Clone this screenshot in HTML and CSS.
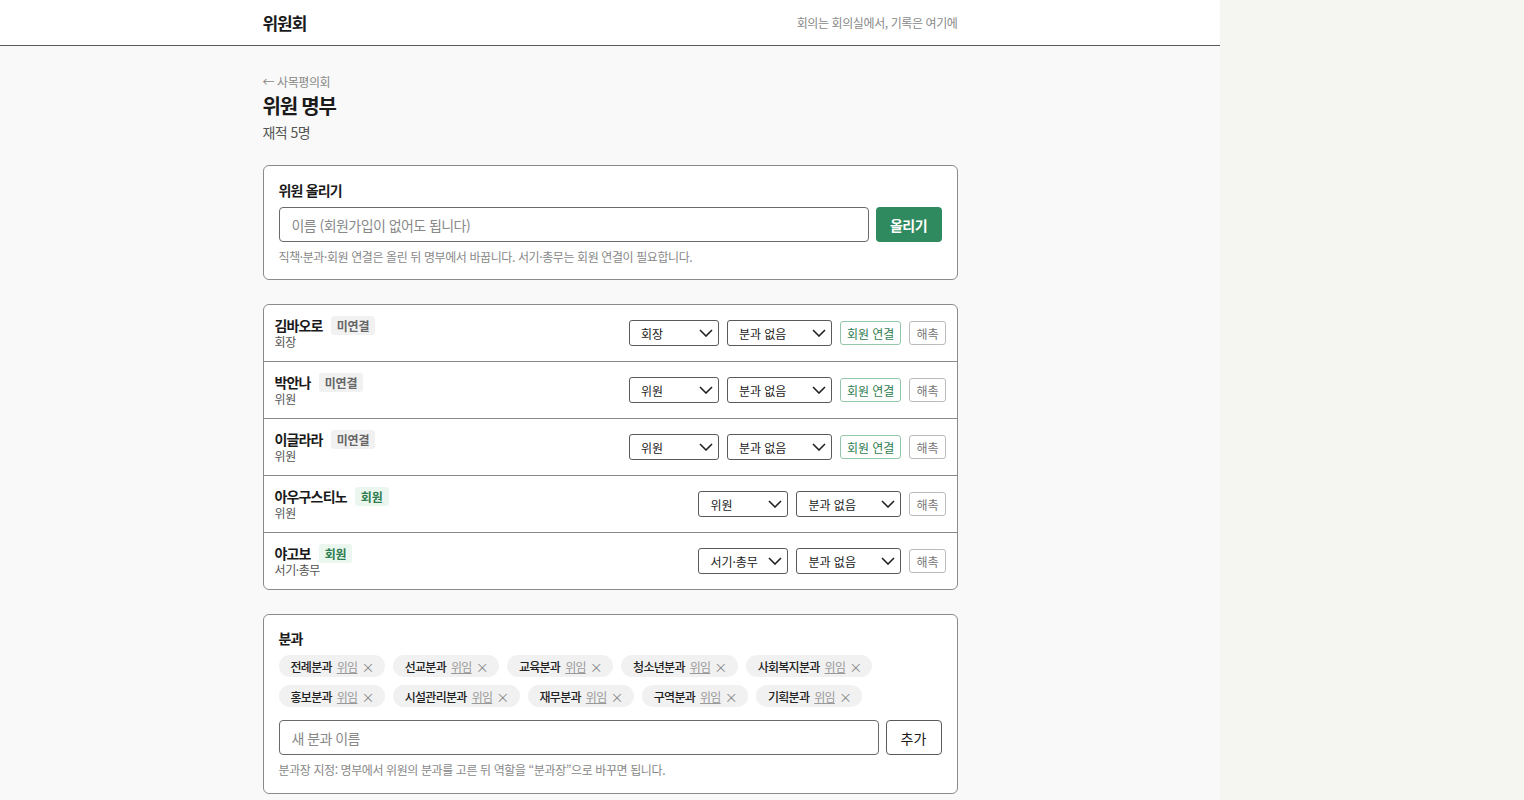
FILE: index.html
```html
<!DOCTYPE html>
<html lang="ko">

<head>
    <meta charset="utf-8">
    <meta name="viewport" content="width=device-width, initial-scale=1.0">
    <title>위원 명부 · 위원회</title>
    <link rel="stylesheet" href="styles.css">
</head>

<body>
    <div class="page">

        <header class="top">
            <div class="wrap top-inner">
                <span class="logo">위원회</span>
                <span class="motto">회의는 회의실에서, 기록은 여기에</span>
            </div>
        </header>

        <main class="wrap">
            <a class="back" href="#">← 사목평의회</a>
            <h1>위원 명부</h1>
            <p class="count">재적 5명</p>

            <!-- 위원 올리기 -->
            <section class="card add">
                <h2>위원 올리기</h2>
                <div class="field">
                    <input type="text" placeholder="이름 (회원가입이 없어도 됩니다)">
                    <button class="btn-green">올리기</button>
                </div>
                <p class="note">직책·분과·회원 연결은 올린 뒤 명부에서 바꿉니다. 서기·총무는 회원 연결이 필요합니다.</p>
            </section>

            <!-- 명부 -->
            <section class="card roster">
                <div class="row">
                    <div class="who">
                        <div class="name">김바오로 <span class="badge">미연결</span></div>
                        <div class="role">회장</div>
                    </div>
                    <div class="ctrl">
                        <select class="sel-role"><option>회장</option></select>
                        <select class="sel-div"><option>분과 없음</option></select>
                        <button class="btn-link">회원 연결</button>
                        <button class="btn-out">해촉</button>
                    </div>
                </div>
                <div class="row">
                    <div class="who">
                        <div class="name">박안나 <span class="badge">미연결</span></div>
                        <div class="role">위원</div>
                    </div>
                    <div class="ctrl">
                        <select class="sel-role"><option>위원</option></select>
                        <select class="sel-div"><option>분과 없음</option></select>
                        <button class="btn-link">회원 연결</button>
                        <button class="btn-out">해촉</button>
                    </div>
                </div>
                <div class="row">
                    <div class="who">
                        <div class="name">이글라라 <span class="badge">미연결</span></div>
                        <div class="role">위원</div>
                    </div>
                    <div class="ctrl">
                        <select class="sel-role"><option>위원</option></select>
                        <select class="sel-div"><option>분과 없음</option></select>
                        <button class="btn-link">회원 연결</button>
                        <button class="btn-out">해촉</button>
                    </div>
                </div>
                <div class="row">
                    <div class="who">
                        <div class="name">아우구스티노 <span class="badge member">회원</span></div>
                        <div class="role">위원</div>
                    </div>
                    <div class="ctrl">
                        <select class="sel-role"><option>위원</option></select>
                        <select class="sel-div"><option>분과 없음</option></select>
                        <button class="btn-out">해촉</button>
                    </div>
                </div>
                <div class="row">
                    <div class="who">
                        <div class="name">야고보 <span class="badge member">회원</span></div>
                        <div class="role">서기·총무</div>
                    </div>
                    <div class="ctrl">
                        <select class="sel-role"><option>서기·총무</option></select>
                        <select class="sel-div"><option>분과 없음</option></select>
                        <button class="btn-out">해촉</button>
                    </div>
                </div>
            </section>

            <!-- 분과 -->
            <section class="card divs">
                <h2>분과</h2>
                <div class="chips">
                    <span class="chip">전례분과 <a href="#">위임</a> <span class="x">×</span></span>
                    <span class="chip">선교분과 <a href="#">위임</a> <span class="x">×</span></span>
                    <span class="chip">교육분과 <a href="#">위임</a> <span class="x">×</span></span>
                    <span class="chip">청소년분과 <a href="#">위임</a> <span class="x">×</span></span>
                    <span class="chip">사회복지분과 <a href="#">위임</a> <span class="x">×</span></span>
                    <span class="chip">홍보분과 <a href="#">위임</a> <span class="x">×</span></span>
                    <span class="chip">시설관리분과 <a href="#">위임</a> <span class="x">×</span></span>
                    <span class="chip">재무분과 <a href="#">위임</a> <span class="x">×</span></span>
                    <span class="chip">구역분과 <a href="#">위임</a> <span class="x">×</span></span>
                    <span class="chip">기획분과 <a href="#">위임</a> <span class="x">×</span></span>
                </div>
                <div class="field">
                    <input type="text" placeholder="새 분과 이름">
                    <button class="btn-plain">추가</button>
                </div>
                <p class="note">분과장 지정: 명부에서 위원의 분과를 고른 뒤 역할을 “분과장”으로 바꾸면 됩니다.</p>
            </section>
        </main>

    </div>
</body>

</html>
```

FILE: styles.css
```css
html {
    background-color: #f5f6f2;
}

body {
    margin: 0;
    font-family: "Noto Sans CJK KR", "Noto Sans", sans-serif;
    color: #1a1a1a;
    letter-spacing: -0.025em;
}

.page {
    width: 1220px;
    min-height: 800px;
    background-color: #f9f9f9;
}

.wrap {
    width: 695px;
    margin: 0 auto;
}

/* 머리 */
.top {
    height: 45px;
    background-color: white;
    border-bottom: 1px solid #5a5a5a;
}

.top-inner {
    height: 45px;
    display: flex;
    align-items: center;
    justify-content: space-between;
}

.logo {
    font-size: 17px;
    font-weight: bold;
    letter-spacing: -0.06em;
}

.motto {
    font-size: 12px;
    color: #888;
}

main {
    padding-top: 27px;
    padding-bottom: 20px;
}

.back {
    display: block;
    font-size: 12px;
    line-height: 18px;
    color: #888;
    text-decoration: none;
}

h1 {
    font-size: 20px;
    line-height: 28px;
    margin: 1px 0 0;
    letter-spacing: -0.06em;
}

.count {
    font-size: 14px;
    line-height: 20px;
    color: #555;
    margin: 2px 0 0;
    letter-spacing: -0.04em;
}

/* 카드 */
.card {
    background-color: white;
    border: 1px solid #8a8a8a;
    border-radius: 6px;
    margin-top: 23px;
}

.card h2 {
    font-size: 14px;
    line-height: 20px;
    margin: 0;
    letter-spacing: -0.06em;
}

.add {
    padding: 14px 15px 13px;
}

.divs {
    padding: 13px 15px 14px;
    margin-top: 24px;
}

.field {
    display: flex;
    gap: 7px;
    margin-top: 7px;
}

.field input {
    flex: 1;
    height: 35px;
    box-sizing: border-box;
    border: 1px solid #6a6a6a;
    border-radius: 4px;
    padding: 0 12px;
    font-family: inherit;
    font-size: 14px;
    letter-spacing: -0.04em;
}

.field input::placeholder {
    color: #888;
}

.btn-green {
    width: 66px;
    height: 35px;
    border: none;
    border-radius: 4px;
    background-color: #2f8a5f;
    color: white;
    font-family: inherit;
    font-weight: bold;
    font-size: 14px;
    letter-spacing: -0.04em;
}

.btn-plain {
    width: 56px;
    height: 35px;
    border: 1px solid #5a5a5a;
    border-radius: 4px;
    background-color: white;
    color: #1a1a1a;
    font-family: inherit;
    font-size: 14px;
}

.note {
    font-size: 12px;
    line-height: 18px;
    color: #888;
    margin: 6px 0 0;
}

/* 명부 */
.roster {
    margin-top: 24px;
}

.row {
    display: flex;
    align-items: center;
    justify-content: space-between;
    padding: 11px;
    border-top: 1px solid #8a8a8a;
}

.row:first-child {
    border-top: none;
}

.name {
    display: flex;
    align-items: center;
    gap: 8px;
    height: 18px;
    font-size: 14px;
    font-weight: bold;
    letter-spacing: -0.06em;
}

.badge {
    padding: 0 6px;
    line-height: 19px;
    border-radius: 3px;
    background-color: #f1f1f1;
    color: #666;
    font-size: 12px;
    letter-spacing: -0.01em;
}

.badge.member {
    background-color: #ebf6ef;
    color: #2e7d4f;
}

.role {
    font-size: 12px;
    line-height: 16px;
    color: #555;
}

.ctrl {
    display: flex;
    align-items: center;
    gap: 8px;
}

select {
    appearance: none;
    height: 26px;
    border: 1px solid #5a5a5a;
    border-radius: 3px;
    background: white url("data:image/svg+xml;utf8,<svg xmlns='http://www.w3.org/2000/svg' width='14' height='8' viewBox='0 0 14 8'><path d='M1 1l6 6 6-6' fill='none' stroke='%23222' stroke-width='1.6'/></svg>") no-repeat right 5px center;
    padding: 0 20px 0 11px;
    font-family: inherit;
    font-size: 12px;
    color: #1a1a1a;
}

.sel-role {
    width: 90px;
}

.sel-div {
    width: 105px;
}

.btn-link,
.btn-out {
    height: 24px;
    border-radius: 3px;
    background-color: white;
    font-family: inherit;
    font-size: 12px;
    padding: 0 6px;
}

.btn-link {
    border: 1px solid #93c7aa;
    color: #2e7d4f;
}

.btn-out {
    border: 1px solid #bbb;
    color: #777;
}

/* 분과 */
.chips {
    display: flex;
    flex-wrap: wrap;
    gap: 8px;
    margin-top: 7px;
    margin-bottom: 13px;
}

.chip {
    display: inline-flex;
    align-items: center;
    gap: 4px;
    height: 22px;
    padding: 0 11px 0 12px;
    border-radius: 11px;
    background-color: #f1f1f1;
    font-size: 12px;
    font-weight: 500;
    color: #222;
    letter-spacing: -0.06em;
}

.chip a {
    color: #999;
    font-weight: normal;
    margin-left: 1px;
}

.chip .x {
    color: #888;
    font-weight: normal;
    font-size: 13px;
}

.divs .field {
    margin-top: 0;
}
```
